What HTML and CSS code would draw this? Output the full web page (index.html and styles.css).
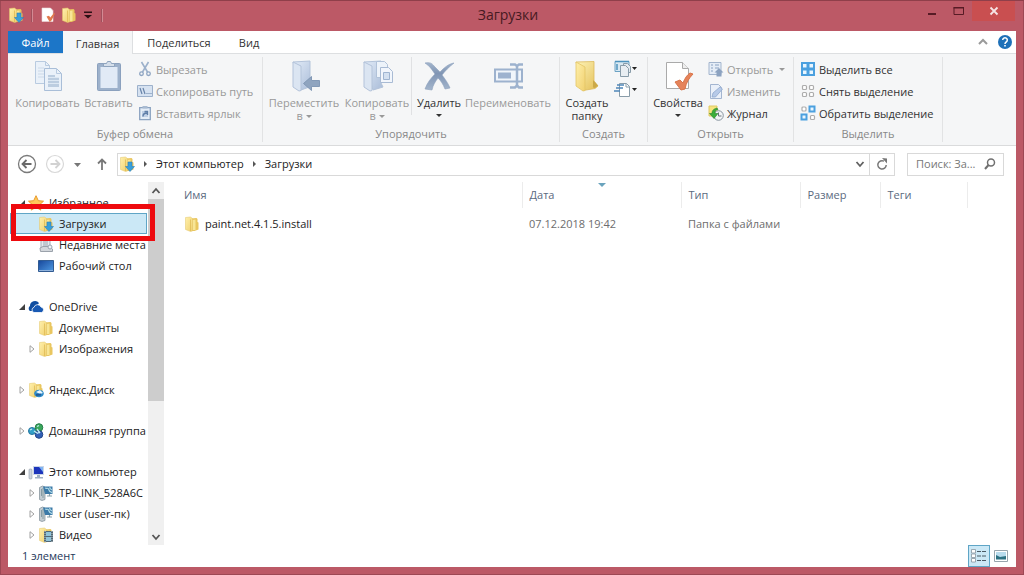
FILE: index.html
```html
<!DOCTYPE html>
<html lang="ru">
<head>
<meta charset="utf-8">
<title>Загрузки</title>
<link rel="stylesheet" href="styles.css">
</head>
<body>
<svg class="defs" aria-hidden="true">
  <defs>
    <linearGradient id="g-folder" x1="0" y1="0" x2="1" y2="1"><stop offset="0" stop-color="#fdf3b8"/><stop offset="1" stop-color="#e3be55"/></linearGradient>
    <linearGradient id="g-front" x1="0" y1="0" x2="1" y2="1"><stop offset="0" stop-color="#fff0ab"/><stop offset="1" stop-color="#f0d070"/></linearGradient>
    <linearGradient id="g-pale" x1="0" y1="0" x2="1" y2="1"><stop offset="0" stop-color="#e3ecf8"/><stop offset="1" stop-color="#a9bcd8"/></linearGradient>
    <linearGradient id="g-cross" x1="0" y1="0" x2="0" y2="1"><stop offset="0" stop-color="#a3b5cc"/><stop offset=".4" stop-color="#8095b4"/><stop offset="1" stop-color="#a3b5cc"/></linearGradient>
    <linearGradient id="g-desk" x1="0" y1="0" x2="1" y2="1"><stop offset="0" stop-color="#17479b"/><stop offset="1" stop-color="#4f9be4"/></linearGradient>
    <symbol id="folder" viewBox="0 0 16 16">
      <path d="M7 2.500l5.500-.5 1 1v3l1 .5v7l-4 1.500H7z" fill="#e9c65f"/>
      <path d="M8.500 4l3-.5v10.500h-3z" fill="#f8e596"/>
      <path d="M1.500 1.500l5-.5 2 1.500v12.500l-2 .5-5-2z" fill="url(#g-front)" stroke="#e2c468" stroke-width=".5"/>
      <path d="M6.500 3.500v11.500" stroke="#dfbb55" stroke-width=".8"/>
    </symbol>
    <symbol id="downloads" viewBox="0 0 16 16">
      <use href="#folder"/>
      <path d="M9 6h4v4.500h2.500l-4.500 5-4.500-5H9z" fill="#389fda" stroke="#2a80bc" stroke-width=".6"/>
    </symbol>
    <symbol id="docscheck" viewBox="0 0 16 16">
      <path d="M2 1h8.500L13 3.500V14.500H2z" fill="#fff" stroke="#ead9d9" stroke-width=".6"/>
      <path d="M6.500 9.500l2.500-.7 1.300 1.700L14 6l1 .5-3.500 7-1.800 1.500z" fill="#e07a4c"/>
    </symbol>
    <symbol id="pc" viewBox="0 0 16 16">
      <path d="M5 2h11v9H5z" fill="#cbd6e6"/><path d="M6 3h9v7H6z" fill="#1d35bb"/><path d="M11 3h4v5z" fill="#7fb4f4"/>
      <path d="M9 11h3v2h3v1.500H7V13h2z" fill="#9fb0c4"/><rect x="1" y="5" width="3" height="10" rx="1" fill="#cfd6df" stroke="#8d9aaa" stroke-width=".6"/>
    </symbol>
    <symbol id="server" viewBox="0 0 16 16">
      <path d="M1.500 2.500l3-1.500 2.500 1v12.500l-3 1-2.500-1z" fill="#c3ccd2" stroke="#7e8d95" stroke-width=".7"/><path d="M3.500 4v7M5 3v10" stroke="#6c8790" stroke-width=".7"/>
      <path d="M5 1.500h9.500v7.500H7z" fill="#3c7aa8"/><path d="M7 3c3 1 3-1 4 2s2 1 3 3M12 2c-1 2 1 2 2 3" fill="none" stroke="#b1dce8" stroke-width="1.200"/>
      <path d="M11.500 9v2M9 11h5" fill="none" stroke="#89a0a9" stroke-width="1.200"/>
    </symbol>
  </defs>
</svg>
<div class="window">
  <header class="titlebar">
    <div class="quick">
      <svg class="i16"><use href="#downloads"/></svg><span class="tick"></span>
      <button aria-label="Свойства"><svg class="i16"><use href="#docscheck"/></svg></button>
      <button aria-label="Новая папка"><svg class="i16"><use href="#folder"/></svg></button>
      <button aria-label="Настройка панели"><svg width="8" height="8" viewBox="0 0 8 8"><path d="M0 .5h8v1.500H0zM0 4h8L4 7.500z" fill="#2c1115"/></svg></button><span class="tick"></span>
    </div>
    <h1>Загрузки</h1>
    <div class="controls">
      <button class="wc" aria-label="Свернуть"><svg width="10" height="10"><path d="M1 7h8v2H1z" fill="#571b25"/></svg></button>
      <button class="wc" aria-label="Развернуть"><svg width="12" height="10"><path d="M1 1.500h9.500v7H1z" fill="none" stroke="#571b25"/><path d="M.5 1h10.500v1.500H.5z" fill="#571b25"/></svg></button>
      <button class="wc close" aria-label="Закрыть"><svg width="10" height="10"><path d="M1.500 1.500l7 7M8.500 1.500l-7 7" stroke="#f6e4e4" stroke-width="1.800"/></svg></button>
    </div>
  </header>

  <nav class="tabs">
    <button class="tab file">Файл</button>
    <button class="tab active">Главная</button>
    <button class="tab share">Поделиться</button>
    <button class="tab view">Вид</button>
    <span class="grow"></span>
    <button class="tool" aria-label="Свернуть ленту"><svg width="10" height="8"><path d="M1 6l4-4 4 4" fill="none" stroke="#9a9a9a" stroke-width="2"/></svg></button>
    <button class="tool" aria-label="Справка"><svg width="16" height="16"><circle cx="8" cy="8" r="7" fill="#1d70b8"/><path d="M5.700 6a2.300 2.300 0 1 1 3.500 2C8.200 8.600 8 9 8 10" fill="none" stroke="#fff" stroke-width="1.500"/><path d="M7.200 11h1.600v1.600H7.200z" fill="#fff"/></svg></button>
  </nav>

  <section class="ribbon">
    <div class="group clipboard">
      <div class="items">
        <button class="big off copy"><svg width="32" height="34" viewBox="0 0 32 34"><g fill="#eaf1f9" stroke="#b9cbe0"><path d="M3.500 2.500h10l4 4v18h-14z"/><path d="M13.500 2.500v4h4" fill="none"/><path d="M12.500 9.500h12l5 5v17h-17z" stroke="#a9bed8"/><path d="M24.500 9.500v5h5" fill="none"/><path d="M6 9h6M6 12h6M6 15h6M6 18h6" stroke="#ccd9e8"/></g><path d="M16 16h7v2h4v10H16z" fill="#bccde0"/><path d="M16 18.500h11M16 21.500h11M16 24.500h11" stroke="#dde8f3"/></svg>Копировать</button>
        <button class="big off paste"><svg width="32" height="34" viewBox="0 0 32 34"><rect x="4.500" y="4.500" width="23" height="27" rx="1" fill="#9db1cb" stroke="#8ba1be"/><path d="M7.500 8h17v21h-17z" fill="#e1eaf6"/><path d="M10.500 4.500h3l1-2h3l1 2h3v3h-11z" fill="#d4deea" stroke="#8fa4be"/></svg>Вставить</button>
        <div class="stack">
          <button class="small off"><svg class="i16" viewBox="0 0 16 16"><path d="M4.500 1l6 10M11.500 1L5.500 11" fill="none" stroke="#9cb1cb" stroke-width="1.600"/><circle cx="4.500" cy="12.700" r="1.800" fill="none" stroke="#8da4c2" stroke-width="1.300"/><circle cx="11.500" cy="12.700" r="1.800" fill="none" stroke="#8da4c2" stroke-width="1.300"/></svg>Вырезать</button>
          <button class="small off"><svg class="i16" viewBox="0 0 16 16"><path d="M.5 2.500h15v11H.5z" fill="#d6e2f1" stroke="#9db1cb"/><path d="M3 5l2 6M6 5l2 6M9.500 10.500h1M11.500 10.500h1M13.500 10.500h1" stroke="#6884a9" stroke-width="1.200"/></svg>Скопировать путь</button>
          <button class="small off"><svg class="i16" viewBox="0 0 16 16"><path d="M2.700 2.700h10.600v12H2.700z" fill="#e4edf7" stroke="#8ba3c1" stroke-width="1.300"/><path d="M5.500 1h5v2.500h-5z" fill="#a9bbd1"/><path d="M5 6h6v6H5z" fill="#bfd0e6"/><path d="M6 11.500c0-2.500 1-3.500 4-3.500M7.500 6.500h3v3.500" fill="none" stroke="#5e7ea8" stroke-width="1.400"/></svg>Вставить ярлык</button>
        </div>
      </div>
      <h2>Буфер обмена</h2>
    </div>
    <div class="group organize">
      <div class="items">
        <button class="big off move"><svg width="32" height="34" viewBox="0 0 32 34"><path d="M5 3l17-1v22l2 3-11 4z" fill="url(#g-pale)" stroke="#b3c3da"/><path d="M5 3l8 4v24.500l-2 .5-6-4z" fill="#dbe5f2" stroke="#b3c3da"/><path d="M31.500 21.500v6h-8V31.500L15.500 24.500l8-7v4z" fill="#8fa4bf" stroke="#8399b6"/></svg>Переместить<span>в <i class="arr"></i></span></button>
        <button class="big off copyto"><svg width="32" height="34" viewBox="0 0 32 34"><path d="M3 3l17-1v22l2 4-10 3z" fill="url(#g-pale)" stroke="#b3c3da"/><path d="M3 3l8 4v24.500l-2 .5-6-4z" fill="#dbe5f2" stroke="#b3c3da"/><path d="M15.500 2.500h8l3 3v13h-11z" fill="#edf3fa" stroke="#b1c2d9"/><path d="M19.500 8.500h8l4 4v11h-12z" fill="#f2f6fc" stroke="#a9bbd4"/><path d="M22.500 13.500h6v7h-6z" fill="#d3e0f0" stroke="#9fb4d0"/></svg>Копировать<span>в <i class="arr"></i></span></button>
        <span class="split"></span>
        <button class="big del"><svg width="32" height="34" viewBox="0 0 32 34"><path d="M2 4c4-1 7 0 9 3l6 6c4-4 8-8 14-9-5 4-9 8-12 12 3 4 6 8 8 13l-5 1c-2-5-4-8-7-11-3 4-5 7-6 12l-7-1c2-6 6-11 10-15C9 11 7 7 2 4z" fill="url(#g-cross)" stroke="#8ca0bc" stroke-width=".6"/></svg>Удалить<i class="arr"></i></button>
        <button class="big off rename"><svg width="32" height="34" viewBox="0 0 32 34"><path d="M3 10.500h27v12H3z" fill="#f0f5fb" stroke="#9db2ce" stroke-width="2"/><path d="M6 13.500h13v6H6z" fill="#9db2cf"/><path d="M18 5.500h5l2 1.500 2-1.500h4M18 28.500h5l2-2 2 2h4M25 7v20" fill="none" stroke="#9db2ce" stroke-width="2.500"/></svg>Переименовать</button>
      </div>
      <h2>Упорядочить</h2>
    </div>
    <div class="group create">
      <div class="items">
        <button class="big newfolder"><svg width="32" height="34" viewBox="0 0 32 34"><path d="M5 3l18-.5V22l4 5-3 2.500-12 2z" fill="url(#g-folder)" stroke="#dcba5c" stroke-width=".8"/><path d="M22 21l5 5.500-3 2.500-2-.5z" fill="#cba949"/><path d="M5 3l9 5v23.500l-2 .5-7-5z" fill="url(#g-front)" stroke="#e3c566" stroke-width=".8"/></svg>Создать<span>папку</span></button>
        <div class="pair">
          <button aria-label="Создать элемент"><svg width="24" height="18" viewBox="0 0 24 18"><path d="M1 1.500h14v10H1z" fill="#d8e8f2" stroke="#6ba2c4"/><path d="M1 1.500h14M3 4v6" stroke="#4d92bd" stroke-width="1.500"/><path d="M9.500 3.500h4l3 3v6h-7z" fill="#e3e9ee" stroke="#899ca9"/><path d="M6.500 5.500h5l3 3v8h-8z" fill="#e9eef2" stroke="#899ca9"/><path d="M18 7h5l-2.500 3z" fill="#222"/></svg></button>
          <button aria-label="Простой доступ"><svg width="24" height="18" viewBox="0 0 24 18"><path d="M5.500 2.500h7l3 3v10h-10z" fill="#fff" stroke="#899ca9"/><path d="M12 2.500v3.500h3.500" fill="none" stroke="#899ca9"/><path d="M3 4h7M2 7h7M0 10h6" stroke="#4f86b9" stroke-width="1.600"/><path d="M18 7h5l-2.500 3z" fill="#222"/></svg></button>
        </div>
      </div>
      <h2>Создать</h2>
    </div>
    <div class="group open">
      <div class="items">
        <button class="big props"><svg width="32" height="34" viewBox="0 0 32 34"><path d="M4.500 3.500h16l6 6v20h-22z" fill="#fff" stroke="#aaa"/><path d="M20.500 3.500v6h6" fill="#eee" stroke="#aaa"/><path d="M13 23l5-2 3 3c2-5 4-8 7-10l3 1c-4 4-7 9-8 15l-4 1z" fill="#e5835a" stroke="#d97449"/></svg>Свойства<i class="arr"></i></button>
        <div class="stack">
          <button class="small off"><svg class="i16" viewBox="0 0 16 16"><path d="M1 1.500h12v12H1z" fill="#e5edf7" stroke="#a3b5cd"/><path d="M3 4h2M7 4h4M3 7h2M7 7h4M3 10h2" stroke="#8aa2c2"/><path d="M11 7l4.500 4.500h-2V15.500h-5v-4h-2z" fill="#8ca2c0"/></svg>Открыть<i class="arr"></i></button>
          <button class="small off"><svg class="i16" viewBox="0 0 16 16"><path d="M2.500 1.500h8l3 3v11h-11z" fill="#eaf0f9" stroke="#a3b5d0"/><path d="M4 14l1-4 7-6 2.500 2-7 8z" fill="#b7cae8" stroke="#8fa8cd" stroke-width=".8"/></svg>Изменить</button>
          <button class="small"><svg class="i16" viewBox="0 0 16 16"><path d="M1 1h8v10H1z" fill="#f5e47d" stroke="#e0c964"/><circle cx="10.500" cy="10.500" r="4.800" fill="#f2f4f6" stroke="#87949f"/><path d="M10.500 7.500v3.500h3" fill="none" stroke="#69747d"/><path d="M9 3C5 4 4 6 4 8.500H1.500L6 13.500l4-5H7c0-3 1-4 3-4z" fill="#3bae3b" stroke="#26832c" stroke-width=".6"/></svg>Журнал</button>
        </div>
      </div>
      <h2>Открыть</h2>
    </div>
    <div class="group select">
      <div class="items">
        <div class="stack">
          <button class="small"><svg class="i16" viewBox="0 0 16 16"><path d="M1 1h14v14H1z" fill="#4ba0df"/><path d="M3 3h3.500v3.500H3zM9.500 3H13v3.500H9.500zM3 9.500h3.500V13H3zM9.500 9.500H13V13H9.500z" fill="#e9f6ff"/></svg>Выделить все</button>
          <button class="small"><svg class="i16" viewBox="0 0 16 16"><g fill="#fff" stroke="#adadad" stroke-width="1.200"><rect x="2.500" y="2.500" width="4" height="4" rx="1"/><rect x="9.500" y="2.500" width="4" height="4" rx="1"/><rect x="2.500" y="9.500" width="4" height="4" rx="1"/><rect x="9.500" y="9.500" width="4" height="4" rx="1"/></g></svg>Снять выделение</button>
          <button class="small"><svg class="i16" viewBox="0 0 16 16"><g fill="#fff" stroke="#adadad" stroke-width="1.200"><rect x="2" y="2" width="4" height="4" rx="1"/><rect x="10.500" y="10.500" width="4" height="4" rx="1"/></g><path d="M9.500 1.500h5v5h-5zM1.500 9.500h5v5h-5z" fill="#e9f6ff" stroke="#4ba0df" stroke-width="2"/></svg>Обратить выделение</button>
        </div>
      </div>
      <h2>Выделить</h2>
    </div>
  </section>

  <section class="address">
    <button class="nav" aria-label="Назад"><svg width="20" height="20"><circle cx="10" cy="10" r="8.500" fill="#fff" stroke="#7a7a7a" stroke-width="1.300"/><path d="M14.500 10H6M9.500 6L5.500 10l4 4" fill="none" stroke="#6a6a6a" stroke-width="1.800"/></svg></button>
    <button class="nav" aria-label="Вперёд"><svg width="20" height="20"><circle cx="10" cy="10" r="8.500" fill="#fff" stroke="#d8d8d8" stroke-width="1.200"/><path d="M5.500 10H14M10.500 6l4 4-4 4" fill="none" stroke="#d2d2d2" stroke-width="1.800"/></svg></button>
    <button class="nav recent" aria-label="Последние"><svg width="8" height="5"><path d="M1 1h7L4.500 5z" fill="#777"/></svg></button>
    <button class="nav up" aria-label="Вверх"><svg width="12" height="14"><path d="M6 13V3M2 6.500L6 2.500l4 4" fill="none" stroke="#787878" stroke-width="1.800"/></svg></button>
    <div class="crumbs">
      <svg class="i16"><use href="#downloads"/></svg>
      <svg width="5" height="8"><path d="M1 1l3 3-3 3z" fill="#555"/></svg>
      <a href="#pc-root">Этот компьютер</a>
      <svg width="5" height="8"><path d="M1 1l3 3-3 3z" fill="#555"/></svg>
      <a href="#files">Загрузки</a>
      <span class="grow"></span>
      <button aria-label="История"><svg width="10" height="8"><path d="M1.500 2L5 6l3.500-4" fill="none" stroke="#606060" stroke-width="1.800"/></svg></button>
      <button class="refresh" aria-label="Обновить"><svg width="12" height="13"><path d="M8 3.200A4.200 4.200 0 1 0 10.200 7" fill="none" stroke="#777" stroke-width="1.500"/><path d="M6 0l5 .5V5.500z" fill="#777"/></svg></button>
    </div>
    <label class="search"><input type="text" placeholder="Поиск: За..." aria-label="Поиск"><svg width="12" height="12"><circle cx="7" cy="4.500" r="3.500" fill="none" stroke="#707070" stroke-width="1.500"/><path d="M4.500 7L1 11" stroke="#707070" stroke-width="2"/></svg></label>
  </section>

  <main class="content">
    <aside class="side">
      <div class="tree">
        <a class="row" href="#fav"><svg class="exp" viewBox="0 0 8 8"><path d="M7 1v6H1z" fill="#404040"/></svg><svg class="i16" viewBox="0 0 16 16"><path d="M8 .7l2.300 5 5.200.5-4 3.600 1.300 5.300L8 12.300l-4.800 2.800 1.300-5.300-4-3.600 5.200-.5z" fill="#ffc759" stroke="#e79a2c"/></svg>Избранное</a>
        <a class="row sub current" href="#files"><span class="exp"></span><svg class="i16"><use href="#downloads"/></svg>Загрузки</a>
        <a class="row sub" href="#recent"><span class="exp"></span><svg class="i16" viewBox="0 0 16 16"><path d="M3 1h9v10H3z" fill="#e6eaee" stroke="#a3adb8"/><path d="M5 4h5M5 6h5M5 8h5" stroke="#9aa5b1"/><path d="M2 11l3-1.500h6l3.500 2.500V14.500h-12z" fill="#d3d7dc" stroke="#9ba2ab"/><circle cx="12" cy="10" r="2" fill="#eef1f4" stroke="#9aa5b1"/></svg>Недавние места</a>
        <a class="row sub" href="#desk"><span class="exp"></span><svg class="i16" viewBox="0 0 16 16"><path d="M.5 2.500h15v11H.5z" fill="url(#g-desk)" stroke="#315b92"/><path d="M1 12.500h14" stroke="#8fb2dc"/></svg>Рабочий стол</a>
        <a class="row gap" href="#od"><svg class="exp" viewBox="0 0 8 8"><path d="M7 1v6H1z" fill="#404040"/></svg><svg class="i16" viewBox="0 0 16 16"><path d="M2 12a3 3 0 0 1 0-5 5 5 0 0 1 9-3L5 12z" fill="#0f4da0"/><path d="M6 13.500a2.700 2.700 0 0 1 0-5.200 3.700 3.700 0 0 1 7-.3 2.800 2.800 0 0 1 .5 5.500z" fill="#1859b3" stroke="#fff" stroke-width=".8"/></svg>OneDrive</a>
        <a class="row sub" href="#docs"><span class="exp"></span><svg class="i16"><use href="#folder"/></svg>Документы</a>
        <a class="row sub" href="#pics"><svg class="exp" viewBox="0 0 8 8"><path d="M2 .7L6 4 2 7.300z" fill="#fff" stroke="#a0a0a0"/></svg><svg class="i16"><use href="#folder"/></svg>Изображения</a>
        <a class="row gap" href="#ya"><svg class="exp" viewBox="0 0 8 8"><path d="M2 .7L6 4 2 7.300z" fill="#fff" stroke="#a0a0a0"/></svg><svg class="i16" viewBox="0 0 16 16"><use href="#folder"/><ellipse cx="11" cy="11.500" rx="4.800" ry="3.800" fill="#2e8bc9"/><path d="M8 10l4-2 3 3-3 1z" fill="#e8f6ff"/><path d="M8 13l5-.5" stroke="#205b99" stroke-width="2"/></svg>Яндекс.Диск</a>
        <a class="row gap" href="#home"><svg class="exp" viewBox="0 0 8 8"><path d="M2 .7L6 4 2 7.300z" fill="#fff" stroke="#a0a0a0"/></svg><svg class="i16" viewBox="0 0 16 16"><circle cx="4" cy="8" r="3.500" fill="#32a0c8" stroke="#25739d"/><circle cx="11" cy="4.500" r="3.800" fill="#3aa85b" stroke="#257c49"/><circle cx="11" cy="11.500" r="3.800" fill="#315fb5" stroke="#244789"/><path d="M2 7l2-1M9 3.500l2-1M9 10.500l2-1M6 8l3 2M9 6l3 4" stroke="#c5edf2" stroke-width="1.300"/></svg>Домашняя группа</a>
        <a class="row gap" href="#pc-root"><svg class="exp" viewBox="0 0 8 8"><path d="M7 1v6H1z" fill="#404040"/></svg><svg class="i16"><use href="#pc"/></svg>Этот компьютер</a>
        <a class="row sub" href="#tp"><svg class="exp" viewBox="0 0 8 8"><path d="M2 .7L6 4 2 7.300z" fill="#fff" stroke="#a0a0a0"/></svg><svg class="i16"><use href="#server"/></svg>TP-LINK_528A6C</a>
        <a class="row sub" href="#user"><svg class="exp" viewBox="0 0 8 8"><path d="M2 .7L6 4 2 7.300z" fill="#fff" stroke="#a0a0a0"/></svg><svg class="i16"><use href="#server"/></svg>user (user-пк)</a>
        <a class="row sub" href="#video"><svg class="exp" viewBox="0 0 8 8"><path d="M2 .7L6 4 2 7.300z" fill="#fff" stroke="#a0a0a0"/></svg><svg class="i16" viewBox="0 0 16 16"><use href="#folder"/><path d="M6 4h9v11H6z" fill="#526875"/><path d="M8 5h5v4H8zM8 10h5v4H8z" fill="#8fc3d9"/><path d="M7 4v11M14 4v11" stroke="#dbe3e6" stroke-width=".8" stroke-dasharray="1 1"/></svg>Видео</a>
      </div>
      <div class="scroll">
        <button aria-label="Прокрутить вверх"><svg width="10" height="8"><path d="M1.500 6L5 2l3.500 4" fill="none" stroke="#555" stroke-width="1.800"/></svg></button>
        <div class="thumb"></div>
        <button aria-label="Прокрутить вниз"><svg width="10" height="8"><path d="M1.500 2L5 6l3.500-4" fill="none" stroke="#555" stroke-width="1.800"/></svg></button>
      </div>
      <div class="mark"></div>
    </aside>
    <div class="files" id="files">
      <table>
        <colgroup><col class="c-name"><col class="c-date"><col class="c-type"><col class="c-size"><col class="c-tags"><col></colgroup>
        <thead><tr><th>Имя</th><th class="sorted">Дата<svg width="8" height="5"><path d="M0 0h8L4 4z" fill="#6aa3bd"/></svg></th><th>Тип</th><th>Размер</th><th>Теги</th><th class="rest"></th></tr></thead>
        <tbody><tr><td class="name"><div><svg class="i16"><use href="#folder"/></svg>paint.net.4.1.5.install</div></td><td>07.12.2018 19:42</td><td>Папка с файлами</td><td></td><td></td><td></td></tr></tbody>
      </table>
    </div>
  </main>

  <footer class="status">
    <span>1 элемент</span><span class="grow"></span>
    <button class="on" aria-label="Таблица"><svg width="18" height="16"><g fill="#fff" stroke="#8896a0" stroke-width=".8"><path d="M1.500 1.500h4v3.500h-4zM1.500 6h4v3.500h-4zM1.500 10.500h4V14h-4z"/></g><path d="M7 3.500h4M12 3.500h4M7 8h4M12 8h4M7 12.500h4M12 12.500h4" stroke="#4a5a65"/></svg></button>
    <button aria-label="Крупные значки"><svg width="14" height="12"><path d="M.5.5h13v11H.5z" fill="#fff" stroke="#98a5ad"/><path d="M2 2h10v7H2z" fill="#b9dced"/><path d="M2 5l4 2 6-1v3.500H2z" fill="#2d7182"/></svg></button>
  </footer>
</div>
</body>
</html>
```
FILE: styles.css
```css
* { box-sizing: border-box; }
html, body { height: 100%; }
body { margin: 0; font: 12px/16px "Open Sans", "Noto Sans", sans-serif; color: #222; }
button { border: 0; padding: 0; margin: 0; background: none; font: inherit; color: inherit; display: inline-flex; align-items: center; justify-content: center; }
a { color: inherit; text-decoration: none; }
svg { display: block; flex: none; }
h1, h2 { margin: 0; font-weight: 400; }
.defs { position: absolute; width: 0; height: 0; }
.i16 { width: 16px; height: 16px; }
.grow { flex: 1; }

.window { min-height: 100%; display: flex; flex-direction: column; background: #bc5966; padding: 0 8px 8px; border-top: 1px solid #8f3f4a; box-shadow: inset 1px 0 #9d4854, inset -1px -1px #9d4854; }
.titlebar { height: 30px; display: grid; grid-template-columns: 1fr auto 1fr; align-items: start; padding-right: 1px; }
.quick { display: flex; align-items: center; gap: 5px; height: 28px; }
.quick .tick { width: 2px; height: 13px; margin: 0 2px; background: #d28a93; border-left: 1px solid #a04f5b; }
.quick button:nth-of-type(3) { margin: 0 2px; }
.titlebar h1 { font-size: 14px; line-height: 28px; color: #471a22; padding-right: 7px; }
.controls { display: flex; justify-content: flex-end; }
.wc { width: 27px; height: 20px; }
.wc.close { width: 43px; background: #c94f50; }

.tabs { display: flex; height: 23px; background: #fff; font-size: 11px; color: #333; border-bottom: 1px solid #dddfe1; }
.tab { padding-top: 2px; }
.tab.file { width: 55px; background: #1c76c8; color: #fff; }
.tab.active { width: 70px; height: 23px; background: #f5f6f7; border-right: 1px solid #dddfe1; }
.tab.share { width: 92px; }
.tab.view { width: 48px; }
.tool { margin-right: 3px; width: 22px; }
.tool + .tool { width: 16px; }

.ribbon { display: flex; height: 92px; background: #f5f6f7; border-bottom: 1px solid #dadbdc; font-size: 11px; line-height: 13px; color: #333; }
.group { display: flex; flex-direction: column; margin: 3px 0; border-right: 1px solid #e2e3e4; }
.group h2 { font-size: 11px; line-height: 17px; color: #888; text-align: center; }
.items { display: flex; align-items: flex-start; height: 71px; }
.clipboard { width: 255px; }
.organize { width: 297px; }
.create { width: 88px; }
.open { width: 146px; }
.select { width: 149px; }
.big { flex-direction: column; justify-content: flex-start; white-space: nowrap; padding-top: 2px; }
.big svg { margin-bottom: 3px; }
.off { color: #999; }
.arr { display: inline-block; border: 3px solid transparent; border-top-color: currentColor; border-bottom: 0; vertical-align: 2px; }
.big > .arr { margin-top: 5px; }
.copy { width: 79px; }
.paste { width: 43px; }
.move { width: 82px; }
.copyto { width: 64px; }
.split { width: 1px; height: 58px; margin: 0 2px; background: #e0e1e3; }
.del { width: 50px; }
.rename { width: 88px; }
.newfolder { width: 54px; }
.pair { display: flex; flex-direction: column; gap: 3px; padding-top: 3px; }
.props { width: 60px; }
.stack { display: flex; flex-direction: column; padding: 1px 0 0 7px; }
.open .stack { padding-left: 0; }
.small { height: 22px; gap: 3px; justify-content: flex-start; white-space: nowrap; }
.select .stack { padding-left: 6px; }
.small .arr { margin-left: 3px; }

.address { display: flex; align-items: center; height: 36px; padding: 0 12px 0 9px; font-size: 11px; }
.nav { margin-right: 8px; width: 20px; height: 20px; }
.nav.recent { width: 8px; margin-right: 14px; }
.nav.up { width: 14px; }
.crumbs { flex: 1; display: flex; align-items: center; height: 23px; border: 1px solid #d9d9d9; padding-left: 1px; gap: 8px; }
.refresh { width: 25px; height: 21px; border-left: 1px solid #d9d9d9; margin-left: -4px; }
.search { display: flex; align-items: center; width: 97px; height: 23px; margin-left: 12px; border: 1px solid #d9d9d9; padding: 0 7px 0 8px; }
.search input { flex: 1; min-width: 0; border: 0; padding: 0; outline: 0; font: inherit; color: #777; background: none; }
.search input::placeholder { color: #777; opacity: 1; }

.content { flex: 1; display: flex; background: #fff; }
.address, .status { background: #fff; }
.side { position: relative; width: 156px; display: flex; }
.tree { flex: 1; min-width: 0; padding: 10px 1px 0 2px; overflow: hidden; font-size: 11px; }
.row { display: flex; align-items: center; gap: 5px; height: 21px; padding-left: 7px; white-space: nowrap; border: 1px solid transparent; }
.row .exp { width: 8px; height: 8px; flex: none; margin-right: -3px; }
.row.sub { padding-left: 17px; }
.row.gap { margin-top: 20px; }
.row.current { background: #cbe8f6; border-color: #5fa5c6; }
.scroll { width: 16px; display: flex; flex-direction: column; background: #f0f0f0; }
.scroll button { height: 17px; }
.thumb { height: 202px; background: #cdcdcd; margin-bottom: auto; }
.mark { position: absolute; left: 3px; top: 22px; width: 144px; height: 37px; border: 5px solid #ee0a0e; }

.files { flex: 1; font-size: 11px; }
table { width: 100%; table-layout: fixed; border-collapse: collapse; }
.c-name { width: 358px; }
.c-date { width: 159px; }
.c-type { width: 119px; }
.c-size { width: 80px; }
.c-tags { width: 87px; }
th { position: relative; height: 20px; padding: 0 0 0 7px; text-align: left; font-weight: 400; color: #5b6a80; border-right: 1px solid #ececec; }
th.rest { border: 0; }
th svg { position: absolute; left: 75px; top: 1px; }
thead tr { height: 26px; }
td { height: 32px; padding: 0 0 0 7px; color: #6d6d6d; }
th:first-child, td:first-child { padding-left: 20px; }
td.name { color: #222; }
td.name div { display: flex; align-items: center; gap: 5px; }

.status { display: flex; align-items: center; height: 22px; padding: 0 4px 0 14px; font-size: 11px; color: #1e395b; }
.status button { width: 22px; height: 22px; }
.status .on { background: #cbe8f6; border: 1px solid #5fa5c6; }
```
